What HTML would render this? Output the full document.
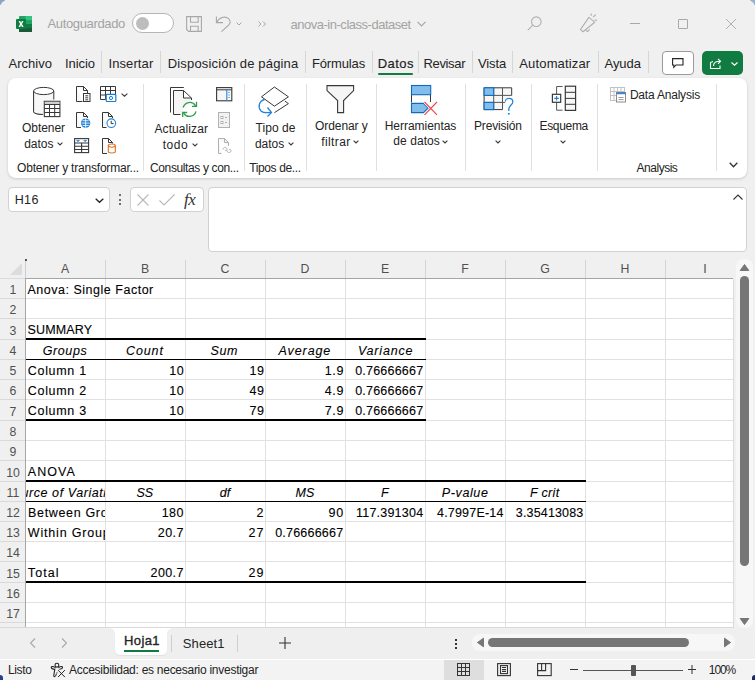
<!DOCTYPE html>
<html><head><meta charset="utf-8">
<style>
*{box-sizing:border-box;margin:0;padding:0}
html,body{width:755px;height:680px;overflow:hidden;background:#f0f0f0;font-family:"Liberation Sans",sans-serif;color:#242424}
.a{position:absolute}
.t{position:absolute;white-space:pre}
svg{position:absolute;overflow:visible}
</style></head><body>
<!-- window corners -->
<div class="a" style="left:0;top:0;width:5px;height:5px;background:#8aa5c4"></div>
<div class="a" style="left:0;top:0;width:10px;height:10px;background:#f0f0f0;border-top-left-radius:8px"></div>
<div class="a" style="left:750px;top:0;width:5px;height:5px;background:#8fb4d6"></div>
<div class="a" style="left:745px;top:0;width:10px;height:10px;background:#f0f0f0;border-top-right-radius:8px"></div>

<!-- excel logo -->
<svg style="left:16px;top:16px" width="16" height="16" viewBox="0 0 16 16">
 <rect x="3" y="0" width="13" height="16" rx="1" fill="#21a366"/>
 <rect x="9.5" y="0" width="6.5" height="4" fill="#33c481"/>
 <rect x="9.5" y="8" width="6.5" height="4" fill="#107c41"/>
 <rect x="3" y="12" width="13" height="4" fill="#185c37"/>
 <rect x="3" y="4" width="6.5" height="4" fill="#107c41"/>
 <rect x="0" y="3" width="10" height="10" rx="1" fill="#107c41"/>
 <path d="M2.6 5 L4.3 5 L5.1 6.9 L5.9 5 L7.5 5 L6 8 L7.6 11 L5.9 11 L5.05 9.1 L4.2 11 L2.5 11 L4.1 8 Z" fill="#fff"/>
</svg>

<!-- toggle -->
<div class="a" style="left:132px;top:13px;width:42px;height:20px;border:1px solid #b5b5b5;border-radius:10px;background:#fff"></div>
<div class="a" style="left:135.5px;top:16.5px;width:13px;height:13px;border-radius:50%;background:#bdbdbd"></div>
<!-- save icon -->
<svg style="left:186px;top:16px" width="16" height="16" viewBox="0 0 16 16" fill="none" stroke="#a8a8a8" stroke-width="1.1">
 <path d="M0.6 0.6 H15.4 V15.4 H2.6 L0.6 13.4 Z"/><path d="M4.5 0.6 V6.2 H12.2 V0.6"/><path d="M4.5 15.4 V10.2 H12.2 V15.4"/>
</svg>
<!-- undo -->
<svg style="left:214px;top:15px" width="18" height="18" viewBox="0 0 18 18" fill="none" stroke="#a8a8a8" stroke-width="1.1">
 <path d="M2.4 1.6 V7.6 H9"/><path d="M2.7 7.3 C5 2.3 11 0.6 14.6 3.6 C17 6 16.2 8.6 14.6 10.2 L7.5 16.6"/>
</svg>
<svg style="left:236px;top:22px" width="6" height="4" viewBox="0 0 6 4" fill="none" stroke="#a8a8a8" stroke-width="1"><path d="M0.5 0.5 L3 3 L5.5 0.5"/></svg>
<svg style="left:258px;top:21px" width="9" height="6" viewBox="0 0 9 6" fill="none" stroke="#a8a8a8" stroke-width="1"><path d="M0.5 0.5 L3 3 L0.5 5.5 M5 0.5 L7.5 3 L5 5.5"/></svg>
<svg style="left:417px;top:21px" width="9" height="6" viewBox="0 0 9 6" fill="none" stroke="#a8a8a8" stroke-width="1.2"><path d="M0.5 0.8 L4.5 4.8 L8.5 0.8"/></svg>
<!-- search -->
<svg style="left:527px;top:16px" width="15" height="15" viewBox="0 0 15 15" fill="none" stroke="#b0b0b0" stroke-width="1.1">
 <circle cx="9.3" cy="5.7" r="4.8"/><path d="M5.8 9.2 L0.8 14.2"/>
</svg>
<!-- megaphone -->
<svg style="left:578px;top:12px" width="20" height="22" viewBox="0 0 20 22" fill="none" stroke="#b0b0b0" stroke-width="1.1" stroke-linejoin="round">
 <path d="M2.4 17.6 L5 19.7 L16.7 10.2 L10.9 5.4 Z"/><path d="M8 17.8 C8.2 20 11.3 20 11.3 17"/><path d="M12.8 3.8 L13.6 1.6 M15.2 5 L17.6 2.6 M16.6 8 L19 8.4"/>
</svg>
<!-- window controls -->
<div class="a" style="left:630px;top:23px;width:10px;height:1px;background:#a8a8a8"></div>
<div class="a" style="left:678px;top:19px;width:10px;height:10px;border:1px solid #a8a8a8;border-radius:1px"></div>
<svg style="left:726px;top:19px" width="10" height="10" viewBox="0 0 10 10" stroke="#b0b0b0" stroke-width="1"><path d="M0 0 L10 10 M10 0 L0 10"/></svg>

<!-- menu separators -->
<div class="a" style="left:101px;top:51px;width:1px;height:22px;background:#d6d6d6"></div>
<div class="a" style="left:160px;top:51px;width:1px;height:22px;background:#d6d6d6"></div>
<div class="a" style="left:305px;top:51px;width:1px;height:22px;background:#d6d6d6"></div>
<div class="a" style="left:372px;top:51px;width:1px;height:22px;background:#d6d6d6"></div>
<div class="a" style="left:418px;top:51px;width:1px;height:22px;background:#d6d6d6"></div>
<div class="a" style="left:472px;top:51px;width:1px;height:22px;background:#d6d6d6"></div>
<div class="a" style="left:512px;top:51px;width:1px;height:22px;background:#d6d6d6"></div>
<div class="a" style="left:598px;top:51px;width:1px;height:22px;background:#d6d6d6"></div>
<div class="a" style="left:648px;top:51px;width:1px;height:22px;background:#d6d6d6"></div>
<div class="a" style="left:378px;top:73px;width:35px;height:2px;background:#107c41;border-radius:1px"></div>
<!-- comment btn -->
<div class="a" style="left:662px;top:51px;width:32px;height:24px;border:1px solid #9a9a9a;border-radius:4px;background:#fff"></div>
<svg style="left:672px;top:58px" width="12" height="11" viewBox="0 0 12 11" fill="none" stroke="#242424" stroke-width="1.1"><path d="M0.6 0.6 H11 V7 H4 L1.8 9.4 V7 H0.6 Z"/></svg>
<!-- share btn -->
<div class="a" style="left:702px;top:51px;width:41px;height:24px;border-radius:5px;background:#107c41"></div>
<svg style="left:709px;top:57px" width="14" height="13" viewBox="0 0 14 13" fill="none" stroke="#fff" stroke-width="1.1"><path d="M4 4.5 L1.5 5.5 V11.5 H11 V8.5"/><path d="M4.5 9 C4.5 5.5 7.5 4.3 11 4.3 M9 1.8 L11.5 4.3 L9 6.8"/></svg>
<svg style="left:731px;top:62px" width="7" height="4" viewBox="0 0 7 4" fill="none" stroke="#fff" stroke-width="1.2"><path d="M0.5 0.5 L3.5 3.3 L6.5 0.5"/></svg>

<!-- ribbon -->
<div class="a" style="left:8px;top:78px;width:739px;height:100px;background:#fff;border-radius:8px;box-shadow:0 1px 3px rgba(0,0,0,.16)"></div>
<div class="a" style="left:143px;top:84px;width:1px;height:87px;background:#e0e0e0"></div>
<div class="a" style="left:244px;top:84px;width:1px;height:87px;background:#e0e0e0"></div>
<div class="a" style="left:306px;top:84px;width:1px;height:87px;background:#e0e0e0"></div>
<div class="a" style="left:376px;top:84px;width:1px;height:87px;background:#e0e0e0"></div>
<div class="a" style="left:465px;top:84px;width:1px;height:87px;background:#e0e0e0"></div>
<div class="a" style="left:531px;top:84px;width:1px;height:87px;background:#e0e0e0"></div>
<div class="a" style="left:597px;top:84px;width:1px;height:87px;background:#e0e0e0"></div>
<div class="a" style="left:716px;top:84px;width:1px;height:87px;background:#e0e0e0"></div>

<!-- ribbon icons -->
<!-- database -->
<svg style="left:33px;top:86px" width="28" height="32" viewBox="0 0 28 32" fill="none" stroke="#383838" stroke-width="1">
 <path d="M0.6 5 V25.6 C0.6 27.2 4.5 28.4 9.9 28.4" fill="#f7f7f7"/>
 <path d="M0.6 5 V25.6 C0.6 27 4 28.2 9.9 28.4 H11.3 V15.3 H20.8 V5 Z" fill="#f7f7f7" stroke="none"/>
 <path d="M0.6 5 V25.6 C0.6 27.2 4.5 28.4 9.9 28.4"/>
 <ellipse cx="10.7" cy="5" rx="10.1" ry="3.6" fill="#fff"/>
 <path d="M20.8 5 V13.6"/>
 <rect x="11.3" y="15.3" width="15.6" height="15.3" fill="#fff" stroke-width="1.1"/>
 <rect x="11.8" y="15.8" width="14.6" height="2.5" fill="#d0d0d0" stroke="none"/>
 <path d="M11.3 18.5 H26.9 M11.3 22.5 H26.9 M11.3 26.5 H26.9 M16.5 18.5 V30.6 M21.7 18.5 V30.6"/>
</svg>
<!-- small icons group 1 -->
<svg style="left:76px;top:86px" width="15" height="16" viewBox="0 0 15 16" fill="none" stroke="#383838" stroke-width="1">
 <path d="M0.5 0.5 H7.5 L11.5 4.5 V7 M0.5 0.5 V15.5 H6.5" fill="#f7f7f7"/><path d="M7.5 0.5 V4.5 H11.5"/><rect x="7.5" y="7.5" width="6.5" height="8" fill="#fff"/><path d="M9.3 9.8 H12.2 M9.3 11.8 H12.2 M9.3 13.8 H12.2"/>
</svg>
<svg style="left:100px;top:86px" width="17" height="16" viewBox="0 0 17 16" fill="none" stroke="#383838" stroke-width="1">
 <path d="M0.5 0.5 H15.5 V8 M0.5 0.5 V13.5 H5.5 M0.5 4.5 H15.5 M0.5 9 H5.5 M5.5 0.5 V13.5 M10.5 0.5 V8"/>
 <rect x="6.2" y="8.4" width="9.6" height="7.1" rx="0.8" fill="#fff" stroke="#1a7bd0" stroke-width="1.2"/><circle cx="11" cy="12" r="1.6" stroke="#1a7bd0"/>
</svg>
<svg style="left:121px;top:93px" width="7" height="4" viewBox="0 0 7 4" fill="none" stroke="#383838" stroke-width="1.1"><path d="M0.6 0.6 L3.5 3.2 L6.4 0.6"/></svg>
<svg style="left:76px;top:112px" width="15" height="16" viewBox="0 0 15 16" fill="none" stroke="#383838" stroke-width="1">
 <path d="M0.5 0.5 H7.5 L11.5 4.5 V6 M0.5 0.5 V15.5 H5" fill="#f7f7f7"/><path d="M7.5 0.5 V4.5 H11.5"/>
 <circle cx="9.6" cy="11.1" r="4.7" fill="#2383d9" stroke="none"/><path d="M5.5 11.1 H13.7 M6.5 8.7 H12.7 M6.5 13.5 H12.7" stroke="#fff" stroke-width="0.8"/><path d="M9.6 6.5 V15.7" stroke="#fff" stroke-width="0.8"/>
</svg>
<svg style="left:102px;top:112px" width="15" height="16" viewBox="0 0 15 16" fill="none" stroke="#383838" stroke-width="1">
 <path d="M0.5 0.5 H6.5 L10.5 4.5 V6 M0.5 0.5 V15.5 H4.5" fill="#f7f7f7"/><path d="M6.5 0.5 V4.5 H10.5"/>
 <circle cx="9.3" cy="11.2" r="4.3" fill="#fff" stroke="#2383d9" stroke-width="1.1"/><path d="M9.2 8.8 V11.6 H11.6" stroke="#383838"/>
</svg>
<svg style="left:74px;top:138px" width="15" height="16" viewBox="0 0 15 16" fill="none" stroke="#383838" stroke-width="1.1">
 <rect x="0.6" y="0.6" width="14" height="14"/><path d="M0.6 5 H14.6 M0.6 8.3 H14.6 M0.6 11.5 H14.6 M7.6 5 V14.6"/>
 <path d="M2.5 2.3 H5.5 L4 3.8 Z M9.7 2.3 H12.7 L11.2 3.8 Z" fill="#2383d9" stroke="#2383d9" stroke-width="0.6"/>
</svg>
<svg style="left:102px;top:138px" width="15" height="16" viewBox="0 0 15 16" fill="none" stroke="#383838" stroke-width="1">
 <path d="M0.5 0.5 H6.5 L10.5 4.5 V5.5 M0.5 0.5 V15.5 H5" fill="#f7f7f7"/><path d="M6.5 0.5 V4.5 H10.5"/>
 <path d="M6.3 7.5 V13.8 C6.3 15.3 13.3 15.3 13.3 13.8 V7.5" stroke="#e0701c" stroke-width="1.1" fill="#fff"/><ellipse cx="9.8" cy="7.6" rx="3.5" ry="1.6" stroke="#e0701c" stroke-width="1.1" fill="#fff"/>
</svg>
<svg style="left:57px;top:142px" width="6" height="4" viewBox="0 0 6 4" fill="none" stroke="#383838" stroke-width="1.1"><path d="M0.6 0.6 L3 3 L5.4 0.6"/></svg>

<!-- actualizar -->
<svg style="left:169px;top:86px" width="29" height="31" viewBox="0 0 29 31" fill="none" stroke="#383838" stroke-width="1">
 <path d="M1.5 26.5 V1.5 H14.8"/>
 <path d="M4.5 4.5 H14.5 V12 H22.5 V28.5 H4.5 Z" fill="#f5f5f5" stroke="none"/>
 <path d="M4.5 4.5 H14.5 L22.5 12 V14 M4.5 4.5 V28.5 H11.5"/>
 <path d="M14.5 4.5 V12 H22.5" fill="none"/>
 <circle cx="20.6" cy="23.4" r="7" fill="#fff" stroke="none"/>
 <path d="M14.2 21.5 A6.8 6.8 0 0 1 26.6 19.8" stroke="#2e9e4e" stroke-width="1.3"/>
 <path d="M27.5 15.8 V20.4 H23" stroke="#2e9e4e" stroke-width="1.3"/>
 <path d="M27 25.4 A6.8 6.8 0 0 1 14.6 27.1" stroke="#2e9e4e" stroke-width="1.3"/>
 <path d="M13.7 31 V26.5 H18.2" stroke="#2e9e4e" stroke-width="1.3"/>
</svg>
<svg style="left:216px;top:87px" width="17" height="15" viewBox="0 0 17 15" fill="none" stroke="#383838" stroke-width="1.1">
 <rect x="0.6" y="0.6" width="15.2" height="13.2" fill="#f7f7f7"/><path d="M0.6 2.8 H15.8" stroke-width="1"/><path d="M10.8 2.8 V13.8" stroke="#2383d9" stroke-width="1.1"/><path d="M13 4.9 V6 M13 7.4 V8.5 M13 9.9 V11" stroke="#2383d9" stroke-width="1.1"/>
</svg>
<svg style="left:218px;top:112px" width="12" height="16" viewBox="0 0 12 16" fill="none" stroke="#b0b0b0" stroke-width="1">
 <rect x="0.5" y="0.5" width="11" height="15" fill="#f2f2f2"/><rect x="3" y="4.5" width="2" height="2"/><rect x="3" y="9.5" width="2" height="2"/><path d="M7 5.5 H9 M7 10.5 H9"/>
</svg>
<svg style="left:218px;top:138px" width="15" height="16" viewBox="0 0 15 16" fill="none" stroke="#b0b0b0" stroke-width="1">
 <path d="M0.5 0.5 H6.5 L10.5 4.5 V8 M0.5 0.5 V15.5 H3.5" fill="#f7f7f7"/><path d="M6.5 0.5 V4.5 H10.5"/><path d="M5 11.5 C5 8.8 9 8.8 9 11.5 C9 13 7 13 7 11.8 M9 12.5 C9 15.2 13 15.2 13 12.5 C13 11 11 11 11 12.2"/>
</svg>
<svg style="left:192px;top:143px" width="6" height="4" viewBox="0 0 6 4" fill="none" stroke="#383838" stroke-width="1.1"><path d="M0.6 0.6 L3 3 L5.4 0.6"/></svg>

<!-- tipos de datos -->
<svg style="left:258px;top:86px" width="32" height="32" viewBox="0 0 32 32" fill="none" stroke="#383838" stroke-width="1">
 <path d="M3.5 10.8 L16.4 1 L30.4 10.8 L16.4 20.2 Z" fill="#fff"/>
 <path d="M26.8 15 L30.4 17.6 L16.4 26.7"/>
 <path d="M6.5 13.5 C1 15 -0.5 21 3 25 C5 27 8 27 13 26.5" stroke="#2383d9" stroke-width="1.3"/>
 <path d="M9.5 21.5 L13.5 26.5 L9.5 30.5" stroke="#2383d9" stroke-width="1.3"/>
</svg>
<svg style="left:288px;top:142px" width="6" height="4" viewBox="0 0 6 4" fill="none" stroke="#383838" stroke-width="1.1"><path d="M0.6 0.6 L3 3 L5.4 0.6"/></svg>

<!-- filter -->
<svg style="left:326px;top:85px" width="29" height="29" viewBox="0 0 29 29" fill="none" stroke="#383838" stroke-width="1.1">
 <path d="M1 0.6 H27.6 V5.6 L17.6 15.6 V27.6 H11.6 V15.6 L1 5.6 Z" fill="#f5f5f5"/>
</svg>
<svg style="left:353px;top:140px" width="6" height="4" viewBox="0 0 6 4" fill="none" stroke="#383838" stroke-width="1.1"><path d="M0.6 0.6 L3 3 L5.4 0.6"/></svg>

<!-- herramientas -->
<svg style="left:410px;top:84px" width="30" height="32" viewBox="0 0 30 32" fill="none" stroke="#383838" stroke-width="1">
 <path d="M1.5 10.7 V18.5 M20.5 10.7 V18" stroke="#383838"/>
 <rect x="1.5" y="1.5" width="19.2" height="9.2" fill="#83bdeb" stroke="#0f6cbd" stroke-width="1.1"/>
 <path d="M1.5 19.4 H13.5 L18.3 24 L13.5 28.6 H1.5 Z" fill="#83bdeb" stroke="#0f6cbd" stroke-width="1.1"/>
 <path d="M14.5 18 L27 30.8 M27 18 L14.5 30.8" stroke="#fff" stroke-width="2.6"/>
 <path d="M14.5 18 L27 30.8 M27 18 L14.5 30.8" stroke="#ec4b52" stroke-width="1.2"/>
</svg>
<svg style="left:442px;top:140px" width="6" height="4" viewBox="0 0 6 4" fill="none" stroke="#383838" stroke-width="1.1"><path d="M0.6 0.6 L3 3 L5.4 0.6"/></svg>

<!-- prevision -->
<svg style="left:483px;top:86px" width="32" height="30" viewBox="0 0 32 30" fill="none" stroke="#383838" stroke-width="1">
 <path d="M19.5 23.6 H1.1 V1.8 H28.7 V9.5" fill="#f7f7f7"/>
 <path d="M1.1 9.4 H28.7 M1.1 16.4 H22 M10.7 1.8 V23.6 M19.5 1.8 V23.6" stroke="#555"/>
 <rect x="1.1" y="1.8" width="9.6" height="7.6" fill="#83bdeb" stroke="#0f6cbd" stroke-width="1.1"/>
 <rect x="1.1" y="16.4" width="9.6" height="7.2" fill="#83bdeb" stroke="#0f6cbd" stroke-width="1.1"/>
 <path d="M22.3 15.5 C22.3 11.5 29.8 11.2 29.8 15.8 C29.8 19.2 25.8 19.5 25.8 23 V25" stroke="#fff" stroke-width="3"/>
 <path d="M22.3 15.5 C22.3 11.5 29.8 11.2 29.8 15.8 C29.8 19.2 25.8 19.5 25.8 23 V25" stroke="#2383d9" stroke-width="1.3"/>
 <rect x="24.9" y="27" width="1.8" height="1.6" fill="#2383d9" stroke="none"/>
</svg>
<svg style="left:495px;top:140px" width="6" height="4" viewBox="0 0 6 4" fill="none" stroke="#383838" stroke-width="1.1"><path d="M0.6 0.6 L3 3 L5.4 0.6"/></svg>

<!-- esquema -->
<svg style="left:551px;top:85px" width="26" height="27" viewBox="0 0 26 27" fill="none" stroke="#383838" stroke-width="1">
 <rect x="14.3" y="1.2" width="10.3" height="24.2" stroke-width="1.2" fill="#f7f7f7"/><path d="M14.3 7.3 H24.6 M14.3 13.4 H24.6 M14.3 19.3 H24.6"/>
 <path d="M11.6 1.5 H5.6 V10 M5.6 17 V25.2 H11.6" stroke="#555"/>
 <rect x="1.4" y="9.3" width="8.3" height="8" fill="#fff" stroke-width="1.2"/><path d="M3.3 13.3 H7.8 M5.55 11 V15.6" stroke="#2383d9" stroke-width="1.2"/>
</svg>
<svg style="left:560px;top:140px" width="6" height="4" viewBox="0 0 6 4" fill="none" stroke="#383838" stroke-width="1.1"><path d="M0.6 0.6 L3 3 L5.4 0.6"/></svg>

<!-- data analysis icon -->
<svg style="left:610px;top:87px" width="17" height="16" viewBox="0 0 17 16" fill="none" stroke="#c2c2c2" stroke-width="1">
 <rect x="0.5" y="0.5" width="14" height="13"/><path d="M0.5 4.5 H14.5 M0.5 8.5 H14.5 M4 0.5 V13.5 M7.5 0.5 V13.5 M11 0.5 V13.5"/>
 <rect x="6.5" y="5.5" width="9" height="9.5" fill="#fff" stroke="#8c8c8c"/><path d="M6.5 6.3 H15.5" stroke="#3f7fd0" stroke-width="1.8"/><path d="M8.5 10.5 H13.5 M8.5 12.6 H13.5" stroke="#9a9a9a"/>
</svg>
<svg style="left:729px;top:162px" width="9" height="6" viewBox="0 0 9 6" fill="none" stroke="#333" stroke-width="1.3"><path d="M0.7 0.7 L4.5 4.7 L8.3 0.7"/></svg>

<!-- formula bar -->
<div class="a" style="left:8px;top:187px;width:102px;height:25px;background:#fff;border:1px solid #d1d1d1;border-radius:4px"></div>
<svg style="left:95px;top:198px" width="9" height="5" viewBox="0 0 9 5" fill="none" stroke="#242424" stroke-width="1.3"><path d="M0.7 0.7 L4.5 4.3 L8.3 0.7"/></svg>
<div class="a" style="left:118.5px;top:194px;width:2px;height:2px;background:#444;border-radius:1px"></div>
<div class="a" style="left:118.5px;top:198.5px;width:2px;height:2px;background:#444;border-radius:1px"></div>
<div class="a" style="left:118.5px;top:203px;width:2px;height:2px;background:#444;border-radius:1px"></div>
<div class="a" style="left:130px;top:187px;width:74px;height:25px;background:#fff;border:1px solid #d1d1d1;border-radius:4px"></div>
<svg style="left:137px;top:194px" width="12" height="12" viewBox="0 0 12 12" stroke="#b8b8b8" stroke-width="1.1"><path d="M0.5 0.5 L11.5 11.5 M11.5 0.5 L0.5 11.5"/></svg>
<svg style="left:159px;top:194px" width="16" height="12" viewBox="0 0 16 12" fill="none" stroke="#b8b8b8" stroke-width="1.1"><path d="M0.5 6.5 L5 11 L15.5 0.5"/></svg>
<div class="t" style="left:184px;top:191px;font-family:'Liberation Serif',serif;font-style:italic;font-size:17px;line-height:17px;color:#333;letter-spacing:-0.5px">fx</div>
<div class="a" style="left:208px;top:187px;width:539px;height:65px;background:#fff;border:1px solid #d1d1d1;border-radius:4px"></div>
<svg style="left:733px;top:194px" width="10" height="6" viewBox="0 0 10 6" fill="none" stroke="#333" stroke-width="1.1"><path d="M0.5 5.5 L5 1 L9.5 5.5"/></svg>

<!-- sheet area -->
<div class="a" style="left:26px;top:279px;width:707px;height:348px;background:#fff"></div>
<div class="a" style="left:25px;top:260px;width:1px;height:18px;background:#cdcdcd"></div>
<div class="a" style="left:25px;top:278px;width:1px;height:349px;background:#a6a6a6"></div>
<div class="a" style="left:0px;top:278px;width:25px;height:1px;background:#dadada"></div>
<div class="a" style="left:25px;top:278px;width:708px;height:1px;background:#a6a6a6"></div>
<div class="a" style="left:24.5px;top:258.5px;width:2px;height:2px;background:#222;border-radius:1px"></div>
<svg style="left:10px;top:263px" width="12" height="12" viewBox="0 0 12 12"><path d="M12 0 V12 H0 Z" fill="#dcdcdc"/></svg>
<div class="a" style="left:26px;top:298px;width:707px;height:1px;background:#e1e1e1"></div>
<div class="a" style="left:0px;top:298px;width:25px;height:1px;background:#d9d9d9"></div>
<div class="a" style="left:26px;top:318px;width:707px;height:1px;background:#e1e1e1"></div>
<div class="a" style="left:0px;top:318px;width:25px;height:1px;background:#d9d9d9"></div>
<div class="a" style="left:26px;top:339px;width:707px;height:1px;background:#e1e1e1"></div>
<div class="a" style="left:0px;top:339px;width:25px;height:1px;background:#d9d9d9"></div>
<div class="a" style="left:26px;top:359px;width:707px;height:1px;background:#e1e1e1"></div>
<div class="a" style="left:0px;top:359px;width:25px;height:1px;background:#d9d9d9"></div>
<div class="a" style="left:26px;top:379px;width:707px;height:1px;background:#e1e1e1"></div>
<div class="a" style="left:0px;top:379px;width:25px;height:1px;background:#d9d9d9"></div>
<div class="a" style="left:26px;top:399px;width:707px;height:1px;background:#e1e1e1"></div>
<div class="a" style="left:0px;top:399px;width:25px;height:1px;background:#d9d9d9"></div>
<div class="a" style="left:26px;top:420px;width:707px;height:1px;background:#e1e1e1"></div>
<div class="a" style="left:0px;top:420px;width:25px;height:1px;background:#d9d9d9"></div>
<div class="a" style="left:26px;top:440px;width:707px;height:1px;background:#e1e1e1"></div>
<div class="a" style="left:0px;top:440px;width:25px;height:1px;background:#d9d9d9"></div>
<div class="a" style="left:26px;top:460px;width:707px;height:1px;background:#e1e1e1"></div>
<div class="a" style="left:0px;top:460px;width:25px;height:1px;background:#d9d9d9"></div>
<div class="a" style="left:26px;top:481px;width:707px;height:1px;background:#e1e1e1"></div>
<div class="a" style="left:0px;top:481px;width:25px;height:1px;background:#d9d9d9"></div>
<div class="a" style="left:26px;top:501px;width:707px;height:1px;background:#e1e1e1"></div>
<div class="a" style="left:0px;top:501px;width:25px;height:1px;background:#d9d9d9"></div>
<div class="a" style="left:26px;top:521px;width:707px;height:1px;background:#e1e1e1"></div>
<div class="a" style="left:0px;top:521px;width:25px;height:1px;background:#d9d9d9"></div>
<div class="a" style="left:26px;top:541px;width:707px;height:1px;background:#e1e1e1"></div>
<div class="a" style="left:0px;top:541px;width:25px;height:1px;background:#d9d9d9"></div>
<div class="a" style="left:26px;top:561px;width:707px;height:1px;background:#e1e1e1"></div>
<div class="a" style="left:0px;top:561px;width:25px;height:1px;background:#d9d9d9"></div>
<div class="a" style="left:26px;top:582px;width:707px;height:1px;background:#e1e1e1"></div>
<div class="a" style="left:0px;top:582px;width:25px;height:1px;background:#d9d9d9"></div>
<div class="a" style="left:26px;top:602px;width:707px;height:1px;background:#e1e1e1"></div>
<div class="a" style="left:0px;top:602px;width:25px;height:1px;background:#d9d9d9"></div>
<div class="a" style="left:26px;top:622px;width:707px;height:1px;background:#e1e1e1"></div>
<div class="a" style="left:0px;top:622px;width:25px;height:1px;background:#d9d9d9"></div>
<div class="a" style="left:105px;top:279px;width:1px;height:348px;background:#e1e1e1"></div>
<div class="a" style="left:105px;top:260px;width:1px;height:18px;background:#d4d4d4"></div>
<div class="a" style="left:185px;top:279px;width:1px;height:348px;background:#e1e1e1"></div>
<div class="a" style="left:185px;top:260px;width:1px;height:18px;background:#d4d4d4"></div>
<div class="a" style="left:265px;top:279px;width:1px;height:348px;background:#e1e1e1"></div>
<div class="a" style="left:265px;top:260px;width:1px;height:18px;background:#d4d4d4"></div>
<div class="a" style="left:345px;top:279px;width:1px;height:348px;background:#e1e1e1"></div>
<div class="a" style="left:345px;top:260px;width:1px;height:18px;background:#d4d4d4"></div>
<div class="a" style="left:425px;top:279px;width:1px;height:348px;background:#e1e1e1"></div>
<div class="a" style="left:425px;top:260px;width:1px;height:18px;background:#d4d4d4"></div>
<div class="a" style="left:505px;top:279px;width:1px;height:348px;background:#e1e1e1"></div>
<div class="a" style="left:505px;top:260px;width:1px;height:18px;background:#d4d4d4"></div>
<div class="a" style="left:585px;top:279px;width:1px;height:348px;background:#e1e1e1"></div>
<div class="a" style="left:585px;top:260px;width:1px;height:18px;background:#d4d4d4"></div>
<div class="a" style="left:665px;top:279px;width:1px;height:348px;background:#e1e1e1"></div>
<div class="a" style="left:665px;top:260px;width:1px;height:18px;background:#d4d4d4"></div>
<div class="a" style="left:26px;top:338px;width:400px;height:2px;background:#000"></div>
<div class="a" style="left:26px;top:359px;width:400px;height:1px;background:#000"></div>
<div class="a" style="left:26px;top:419px;width:400px;height:2px;background:#000"></div>
<div class="a" style="left:26px;top:480px;width:560px;height:2px;background:#000"></div>
<div class="a" style="left:26px;top:501px;width:560px;height:1px;background:#000"></div>
<div class="a" style="left:26px;top:581px;width:560px;height:2px;background:#000"></div>
<div class="a" style="left:0;top:627px;width:734px;height:1px;background:#d9d9d9"></div>
<div class="a" style="left:733px;top:279px;width:1px;height:349px;background:#dcdcdc"></div>

<!-- vertical scrollbar -->
<div class="a" style="left:736px;top:259px;width:17px;height:369px;background:#f7f7f7;border-radius:8px"></div>
<svg style="left:740px;top:264px" width="9" height="7" viewBox="0 0 9 7"><path d="M4.5 0.5 L8.8 6.5 H0.2 Z" fill="#767676" stroke="#767676" stroke-linejoin="round"/></svg>
<div class="a" style="left:740px;top:276px;width:9px;height:290px;background:#767676;border-radius:4.5px"></div>
<svg style="left:740px;top:618px" width="9" height="7" viewBox="0 0 9 7"><path d="M0.2 0.5 H8.8 L4.5 6.5 Z" fill="#767676" stroke="#767676" stroke-linejoin="round"/></svg>

<!-- tab bar -->
<div class="a" style="left:0;top:628px;width:755px;height:31px;background:#efefef"></div>
<div class="a" style="left:100px;top:628px;width:80px;height:8px;background:#fff"></div>
<div class="a" style="left:0px;top:628px;width:115px;height:31px;background:#efefef;border-radius:0 6px 0 0"></div>
<div class="a" style="left:167px;top:628px;width:588px;height:31px;background:#efefef;border-radius:6px 0 0 0"></div>
<div class="a" style="left:115px;top:628px;width:52px;height:27px;background:#fff;border-radius:0 0 5px 5px;box-shadow:0 1px 1px rgba(0,0,0,.06)"></div>
<div class="a" style="left:124px;top:650px;width:35px;height:2px;background:#107c41"></div>
<svg style="left:29px;top:638px" width="7" height="10" viewBox="0 0 7 10" fill="none" stroke="#a8a8a8" stroke-width="1.1"><path d="M6 0.5 L1.5 5 L6 9.5"/></svg>
<svg style="left:61px;top:638px" width="7" height="10" viewBox="0 0 7 10" fill="none" stroke="#a8a8a8" stroke-width="1.1"><path d="M1 0.5 L5.5 5 L1 9.5"/></svg>
<div class="a" style="left:171px;top:635px;width:1px;height:17px;background:#cfcfcf"></div>
<div class="a" style="left:237px;top:635px;width:1px;height:17px;background:#cfcfcf"></div>
<svg style="left:279px;top:637px" width="12" height="12" viewBox="0 0 12 12" stroke="#333" stroke-width="1.1"><path d="M6 0 V12 M0 6 H12"/></svg>
<div class="a" style="left:455px;top:639px;width:2px;height:2px;background:#333"></div>
<div class="a" style="left:455px;top:643px;width:2px;height:2px;background:#333"></div>
<div class="a" style="left:455px;top:647px;width:2px;height:2px;background:#333"></div>
<!-- h scrollbar -->
<div class="a" style="left:472px;top:634px;width:263px;height:17px;background:#f7f7f7;border-radius:8px"></div>
<svg style="left:477px;top:638px" width="7" height="9" viewBox="0 0 7 9"><path d="M6.5 0.2 V8.8 L0.5 4.5 Z" fill="#767676" stroke="#767676" stroke-linejoin="round"/></svg>
<div class="a" style="left:488px;top:638px;width:201px;height:9px;background:#767676;border-radius:4.5px"></div>
<svg style="left:724px;top:638px" width="7" height="9" viewBox="0 0 7 9"><path d="M0.5 0.2 V8.8 L6.5 4.5 Z" fill="#767676" stroke="#767676" stroke-linejoin="round"/></svg>

<!-- status bar -->
<div class="a" style="left:0;top:659px;width:755px;height:1px;background:#fff"></div>
<div class="a" style="left:0;top:660px;width:755px;height:20px;background:#f3f3f3"></div>
<svg style="left:50px;top:662px" width="16" height="16" viewBox="0 0 16 16" fill="none" stroke="#242424" stroke-width="1.1" stroke-linecap="round">
 <circle cx="6.9" cy="3.2" r="1.9"/>
 <path d="M5.2 5.6 C3.5 4.2 1.2 4 1.3 5.6 C1.4 6.8 3.5 7.2 4.8 7.3 L4 12 C3.6 14 3.8 14.7 4.6 14.7 C5.4 14.7 6 13.5 6.3 12"/>
 <path d="M8.6 5.6 C10.3 4.2 12.6 4 12.5 5.6 C12.4 6.5 11 7 9.8 7.3"/>
 <circle cx="6.9" cy="10.8" r="0.6" fill="#242424" stroke="none"/>
 <path d="M8.3 8.4 L14.6 14.8 M14.6 8.4 L8.3 14.8" stroke-width="1"/>
</svg>
<div class="a" style="left:444px;top:660px;width:40px;height:20px;background:#dedede"></div>
<svg style="left:457px;top:663px" width="13" height="13" viewBox="0 0 13 13" fill="none" stroke="#333" stroke-width="1"><rect x="0.5" y="0.5" width="12" height="12"/><path d="M4.5 0.5 V12.5 M8.5 0.5 V12.5 M0.5 4.5 H12.5 M0.5 8.5 H12.5"/></svg>
<svg style="left:497px;top:663px" width="14" height="13" viewBox="0 0 14 13" fill="none" stroke="#333" stroke-width="1.1"><rect x="0.6" y="0.6" width="12.8" height="12"/><rect x="3.5" y="2.6" width="7" height="8"/><path d="M5 4.5 H9 M5 6.5 H9 M5 8.4 H9"/></svg>
<svg style="left:537px;top:663px" width="15" height="13" viewBox="0 0 15 13" fill="none" stroke="#333" stroke-width="1.1"><rect x="0.6" y="0.6" width="13.6" height="12"/><path d="M8.6 0.6 V7.6 H0.6 M4.6 0.6 V7.6"/></svg>
<div class="a" style="left:570px;top:669px;width:8px;height:1px;background:#333"></div>
<div class="a" style="left:583px;top:670px;width:100px;height:1px;background:#555"></div>
<div class="a" style="left:631px;top:665px;width:5px;height:11px;background:#555;border-radius:1px"></div>
<svg style="left:688px;top:665px" width="8" height="9" viewBox="0 0 8 9" stroke="#333" stroke-width="1"><path d="M4 0 V9 M0 4.5 H8"/></svg>
<div class="a" style="left:0;top:675px;width:3px;height:5px;background:#2a3f8a;border-top-right-radius:3px"></div>

<div class="a" style="left:752px;top:675px;width:3px;height:5px;background:#1c2a6a;border-top-left-radius:3px"></div>
<div class="t" style="left:47.48px;top:17.02px;font-size:13px;line-height:13px;color:#a3a3a3;letter-spacing:-0.350px;">Autoguardado</div>
<div class="t" style="left:290.48px;top:18.02px;font-size:13px;line-height:13px;color:#a3a3a3;letter-spacing:-0.479px;">anova-in-class-dataset</div>
<div class="t" style="left:8.48px;top:57.02px;font-size:13px;line-height:13px;color:#242424;letter-spacing:0.030px;">Archivo</div>
<div class="t" style="left:64.88px;top:57.02px;font-size:13px;line-height:13px;color:#242424;letter-spacing:-0.024px;">Inicio</div>
<div class="t" style="left:108.48px;top:57.02px;font-size:13px;line-height:13px;color:#242424;letter-spacing:0.095px;">Insertar</div>
<div class="t" style="left:167.78px;top:57.02px;font-size:13px;line-height:13px;color:#242424;letter-spacing:0.162px;">Disposición de página</div>
<div class="t" style="left:311.98px;top:57.02px;font-size:13px;line-height:13px;color:#242424;letter-spacing:-0.135px;">Fórmulas</div>
<div class="t" style="left:423.48px;top:57.02px;font-size:13px;line-height:13px;color:#242424;letter-spacing:-0.340px;">Revisar</div>
<div class="t" style="left:477.88px;top:57.02px;font-size:13px;line-height:13px;color:#242424;letter-spacing:-0.083px;">Vista</div>
<div class="t" style="left:519.28px;top:57.02px;font-size:13px;line-height:13px;color:#242424;letter-spacing:0.157px;">Automatizar</div>
<div class="t" style="left:604.48px;top:57.02px;font-size:13px;line-height:13px;color:#242424;letter-spacing:-0.025px;">Ayuda</div>
<div class="t" style="left:377.68px;top:57.02px;font-size:13px;line-height:13px;color:#1f1f1f;letter-spacing:0.468px;-webkit-text-stroke:0.2px #1f1f1f;">Datos</div>
<div class="t" style="left:22.02px;top:121.82px;font-size:12px;line-height:12px;color:#242424;letter-spacing:-0.050px;">Obtener</div>
<div class="t" style="left:24.22px;top:137.52px;font-size:12px;line-height:12px;color:#242424;letter-spacing:-0.025px;">datos</div>
<div class="t" style="left:17.12px;top:161.62px;font-size:12px;line-height:12px;color:#242424;letter-spacing:-0.203px;">Obtener y transformar...</div>
<div class="t" style="left:154.52px;top:122.72px;font-size:12px;line-height:12px;color:#242424;letter-spacing:0.075px;">Actualizar</div>
<div class="t" style="left:162.72px;top:138.62px;font-size:12px;line-height:12px;color:#242424;letter-spacing:0.534px;">todo</div>
<div class="t" style="left:150.02px;top:162.02px;font-size:12px;line-height:12px;color:#242424;letter-spacing:-0.378px;">Consultas y con...</div>
<div class="t" style="left:255.52px;top:122.02px;font-size:12px;line-height:12px;color:#242424;letter-spacing:0.061px;">Tipo de</div>
<div class="t" style="left:254.92px;top:138.02px;font-size:12px;line-height:12px;color:#242424;letter-spacing:-0.025px;">datos</div>
<div class="t" style="left:249.22px;top:162.02px;font-size:12px;line-height:12px;color:#242424;letter-spacing:-0.383px;">Tipos de...</div>
<div class="t" style="left:315.02px;top:120.42px;font-size:12px;line-height:12px;color:#242424;letter-spacing:-0.075px;">Ordenar y</div>
<div class="t" style="left:321.32px;top:135.72px;font-size:12px;line-height:12px;color:#242424;letter-spacing:0.381px;">filtrar</div>
<div class="t" style="left:384.72px;top:119.82px;font-size:12px;line-height:12px;color:#242424;letter-spacing:-0.034px;">Herramientas</div>
<div class="t" style="left:393.32px;top:135.02px;font-size:12px;line-height:12px;color:#242424;letter-spacing:0.073px;">de datos</div>
<div class="t" style="left:474.02px;top:119.82px;font-size:12px;line-height:12px;color:#242424;letter-spacing:-0.187px;">Previsión</div>
<div class="t" style="left:539.52px;top:119.82px;font-size:12px;line-height:12px;color:#242424;letter-spacing:-0.324px;">Esquema</div>
<div class="t" style="left:629.92px;top:89.22px;font-size:12px;line-height:12px;color:#242424;letter-spacing:-0.204px;">Data Analysis</div>
<div class="t" style="left:636.52px;top:162.02px;font-size:12px;line-height:12px;color:#242424;letter-spacing:-0.475px;">Analysis</div>
<div class="t" style="left:14.70px;top:193.77px;font-size:12.5px;line-height:12.5px;color:#242424;letter-spacing:0.381px;">H16</div>
<div class="t" style="left:60.90px;top:262.87px;font-size:12.3px;line-height:12.3px;color:#505050;">A</div>
<div class="t" style="left:140.90px;top:262.87px;font-size:12.3px;line-height:12.3px;color:#505050;">B</div>
<div class="t" style="left:220.55px;top:262.87px;font-size:12.3px;line-height:12.3px;color:#505050;">C</div>
<div class="t" style="left:300.55px;top:262.87px;font-size:12.3px;line-height:12.3px;color:#505050;">D</div>
<div class="t" style="left:380.90px;top:262.87px;font-size:12.3px;line-height:12.3px;color:#505050;">E</div>
<div class="t" style="left:461.24px;top:262.87px;font-size:12.3px;line-height:12.3px;color:#505050;">F</div>
<div class="t" style="left:540.21px;top:262.87px;font-size:12.3px;line-height:12.3px;color:#505050;">G</div>
<div class="t" style="left:620.55px;top:262.87px;font-size:12.3px;line-height:12.3px;color:#505050;">H</div>
<div class="t" style="left:703.29px;top:262.87px;font-size:12.3px;line-height:12.3px;color:#505050;">I</div>
<div class="t" style="left:9.58px;top:283.87px;font-size:12.3px;line-height:12.3px;color:#505050;">1</div>
<div class="t" style="left:9.58px;top:303.87px;font-size:12.3px;line-height:12.3px;color:#505050;">2</div>
<div class="t" style="left:9.58px;top:324.87px;font-size:12.3px;line-height:12.3px;color:#505050;">3</div>
<div class="t" style="left:9.58px;top:344.87px;font-size:12.3px;line-height:12.3px;color:#505050;">4</div>
<div class="t" style="left:9.58px;top:364.87px;font-size:12.3px;line-height:12.3px;color:#505050;">5</div>
<div class="t" style="left:9.58px;top:384.87px;font-size:12.3px;line-height:12.3px;color:#505050;">6</div>
<div class="t" style="left:9.58px;top:405.87px;font-size:12.3px;line-height:12.3px;color:#505050;">7</div>
<div class="t" style="left:9.58px;top:425.87px;font-size:12.3px;line-height:12.3px;color:#505050;">8</div>
<div class="t" style="left:9.58px;top:445.87px;font-size:12.3px;line-height:12.3px;color:#505050;">9</div>
<div class="t" style="left:6.16px;top:466.87px;font-size:12.3px;line-height:12.3px;color:#505050;">10</div>
<div class="t" style="left:6.62px;top:486.87px;font-size:12.3px;line-height:12.3px;color:#505050;">11</div>
<div class="t" style="left:6.16px;top:506.87px;font-size:12.3px;line-height:12.3px;color:#505050;">12</div>
<div class="t" style="left:6.16px;top:526.87px;font-size:12.3px;line-height:12.3px;color:#505050;">13</div>
<div class="t" style="left:6.16px;top:546.87px;font-size:12.3px;line-height:12.3px;color:#505050;">14</div>
<div class="t" style="left:6.16px;top:567.87px;font-size:12.3px;line-height:12.3px;color:#505050;">15</div>
<div class="t" style="left:6.16px;top:587.87px;font-size:12.3px;line-height:12.3px;color:#505050;">16</div>
<div class="t" style="left:6.16px;top:607.87px;font-size:12.3px;line-height:12.3px;color:#505050;">17</div>
<div class="t" style="left:27.50px;top:283.77px;font-size:12.5px;line-height:12.5px;color:#000;letter-spacing:0.513px;-webkit-text-stroke:0.1px #000;">Anova: Single Factor</div>
<div class="t" style="left:27.50px;top:323.77px;font-size:12.5px;line-height:12.5px;color:#000;letter-spacing:0.155px;-webkit-text-stroke:0.1px #000;">SUMMARY</div>
<div class="t" style="left:42.70px;top:344.77px;font-size:12.5px;line-height:12.5px;color:#000;letter-spacing:0.600px;font-style:italic;-webkit-text-stroke:0.1px #000;">Groups</div>
<div class="t" style="left:126.10px;top:344.77px;font-size:12.5px;line-height:12.5px;color:#000;letter-spacing:0.860px;font-style:italic;-webkit-text-stroke:0.1px #000;">Count</div>
<div class="t" style="left:210.50px;top:344.77px;font-size:12.5px;line-height:12.5px;color:#000;letter-spacing:0.648px;font-style:italic;-webkit-text-stroke:0.1px #000;">Sum</div>
<div class="t" style="left:278.60px;top:344.77px;font-size:12.5px;line-height:12.5px;color:#000;letter-spacing:0.893px;font-style:italic;-webkit-text-stroke:0.1px #000;">Average</div>
<div class="t" style="left:357.90px;top:344.77px;font-size:12.5px;line-height:12.5px;color:#000;letter-spacing:0.818px;font-style:italic;-webkit-text-stroke:0.1px #000;">Variance</div>
<div class="t" style="left:27.80px;top:364.77px;font-size:12.5px;line-height:12.5px;color:#000;letter-spacing:0.686px;-webkit-text-stroke:0.1px #000;">Column 1</div>
<div class="t" style="left:169.20px;top:364.77px;font-size:12.5px;line-height:12.5px;color:#000;letter-spacing:0.594px;-webkit-text-stroke:0.1px #000;">10</div>
<div class="t" style="left:249.50px;top:364.77px;font-size:12.5px;line-height:12.5px;color:#000;letter-spacing:0.494px;-webkit-text-stroke:0.1px #000;">19</div>
<div class="t" style="left:324.80px;top:364.77px;font-size:12.5px;line-height:12.5px;color:#000;letter-spacing:0.605px;-webkit-text-stroke:0.1px #000;">1.9</div>
<div class="t" style="left:355.20px;top:364.77px;font-size:12.5px;line-height:12.5px;color:#000;letter-spacing:0.206px;-webkit-text-stroke:0.1px #000;">0.76666667</div>
<div class="t" style="left:27.80px;top:384.77px;font-size:12.5px;line-height:12.5px;color:#000;letter-spacing:0.686px;-webkit-text-stroke:0.1px #000;">Column 2</div>
<div class="t" style="left:169.20px;top:384.77px;font-size:12.5px;line-height:12.5px;color:#000;letter-spacing:0.594px;-webkit-text-stroke:0.1px #000;">10</div>
<div class="t" style="left:249.50px;top:384.77px;font-size:12.5px;line-height:12.5px;color:#000;letter-spacing:0.494px;-webkit-text-stroke:0.1px #000;">49</div>
<div class="t" style="left:324.80px;top:384.77px;font-size:12.5px;line-height:12.5px;color:#000;letter-spacing:0.605px;-webkit-text-stroke:0.1px #000;">4.9</div>
<div class="t" style="left:355.20px;top:384.77px;font-size:12.5px;line-height:12.5px;color:#000;letter-spacing:0.206px;-webkit-text-stroke:0.1px #000;">0.76666667</div>
<div class="t" style="left:27.80px;top:404.77px;font-size:12.5px;line-height:12.5px;color:#000;letter-spacing:0.686px;-webkit-text-stroke:0.1px #000;">Column 3</div>
<div class="t" style="left:169.20px;top:404.77px;font-size:12.5px;line-height:12.5px;color:#000;letter-spacing:0.594px;-webkit-text-stroke:0.1px #000;">10</div>
<div class="t" style="left:249.50px;top:404.77px;font-size:12.5px;line-height:12.5px;color:#000;letter-spacing:0.494px;-webkit-text-stroke:0.1px #000;">79</div>
<div class="t" style="left:324.80px;top:404.77px;font-size:12.5px;line-height:12.5px;color:#000;letter-spacing:0.605px;-webkit-text-stroke:0.1px #000;">7.9</div>
<div class="t" style="left:355.20px;top:404.77px;font-size:12.5px;line-height:12.5px;color:#000;letter-spacing:0.206px;-webkit-text-stroke:0.1px #000;">0.76666667</div>
<div class="t" style="left:27.80px;top:465.77px;font-size:12.5px;line-height:12.5px;color:#000;letter-spacing:1.064px;-webkit-text-stroke:0.1px #000;">ANOVA</div>
<div class="a" style="left:26px;top:477px;width:79px;height:24px;overflow:hidden"><div class="t" style="left:-20.95px;top:9.77px;font-size:12.5px;line-height:12.5px;color:#000;letter-spacing:0.568px;font-style:italic;-webkit-text-stroke:0.1px #000;">Source of Variation</div></div>
<div class="t" style="left:136.46px;top:486.77px;font-size:12.5px;line-height:12.5px;color:#000;font-style:italic;-webkit-text-stroke:0.1px #000;">SS</div>
<div class="t" style="left:219.78px;top:486.77px;font-size:12.5px;line-height:12.5px;color:#000;font-style:italic;-webkit-text-stroke:0.1px #000;">df</div>
<div class="t" style="left:295.62px;top:486.77px;font-size:12.5px;line-height:12.5px;color:#000;font-style:italic;-webkit-text-stroke:0.1px #000;">MS</div>
<div class="t" style="left:380.93px;top:486.77px;font-size:12.5px;line-height:12.5px;color:#000;font-style:italic;-webkit-text-stroke:0.1px #000;">F</div>
<div class="t" style="left:441.80px;top:486.77px;font-size:12.5px;line-height:12.5px;color:#000;letter-spacing:0.618px;font-style:italic;-webkit-text-stroke:0.1px #000;">P-value</div>
<div class="t" style="left:529.90px;top:486.77px;font-size:12.5px;line-height:12.5px;color:#000;letter-spacing:0.351px;font-style:italic;-webkit-text-stroke:0.1px #000;">F crit</div>
<div class="a" style="left:26px;top:497px;width:79px;height:24px;overflow:hidden"><div class="t" style="left:2.10px;top:9.77px;font-size:12.5px;line-height:12.5px;color:#000;letter-spacing:0.658px;-webkit-text-stroke:0.1px #000;">Between Groups</div></div>
<div class="t" style="left:161.80px;top:506.77px;font-size:12.5px;line-height:12.5px;color:#000;letter-spacing:0.370px;-webkit-text-stroke:0.1px #000;">180</div>
<div class="t" style="left:256.45px;top:506.77px;font-size:12.5px;line-height:12.5px;color:#000;-webkit-text-stroke:0.1px #000;">2</div>
<div class="t" style="left:328.50px;top:506.77px;font-size:12.5px;line-height:12.5px;color:#000;letter-spacing:0.694px;-webkit-text-stroke:0.1px #000;">90</div>
<div class="t" style="left:356.00px;top:506.77px;font-size:12.5px;line-height:12.5px;color:#000;letter-spacing:0.219px;-webkit-text-stroke:0.1px #000;">117.391304</div>
<div class="t" style="left:437.00px;top:506.77px;font-size:12.5px;line-height:12.5px;color:#000;letter-spacing:0.195px;-webkit-text-stroke:0.1px #000;">4.7997E-14</div>
<div class="t" style="left:515.80px;top:506.77px;font-size:12.5px;line-height:12.5px;color:#000;letter-spacing:0.161px;-webkit-text-stroke:0.1px #000;">3.35413083</div>
<div class="a" style="left:26px;top:517px;width:79px;height:24px;overflow:hidden"><div class="t" style="left:1.80px;top:9.77px;font-size:12.5px;line-height:12.5px;color:#000;letter-spacing:0.818px;-webkit-text-stroke:0.1px #000;">Within Groups</div></div>
<div class="t" style="left:157.80px;top:526.77px;font-size:12.5px;line-height:12.5px;color:#000;letter-spacing:0.419px;-webkit-text-stroke:0.1px #000;">20.7</div>
<div class="t" style="left:248.60px;top:526.77px;font-size:12.5px;line-height:12.5px;color:#000;letter-spacing:0.894px;-webkit-text-stroke:0.1px #000;">27</div>
<div class="t" style="left:275.20px;top:526.77px;font-size:12.5px;line-height:12.5px;color:#000;letter-spacing:0.206px;-webkit-text-stroke:0.1px #000;">0.76666667</div>
<div class="t" style="left:27.80px;top:566.77px;font-size:12.5px;line-height:12.5px;color:#000;letter-spacing:1.098px;-webkit-text-stroke:0.1px #000;">Total</div>
<div class="t" style="left:150.60px;top:566.77px;font-size:12.5px;line-height:12.5px;color:#000;letter-spacing:0.380px;-webkit-text-stroke:0.1px #000;">200.7</div>
<div class="t" style="left:248.60px;top:566.77px;font-size:12.5px;line-height:12.5px;color:#000;letter-spacing:0.894px;-webkit-text-stroke:0.1px #000;">29</div>
<div class="t" style="left:124.08px;top:634.02px;font-size:13px;line-height:13px;color:#242424;letter-spacing:0.368px;-webkit-text-stroke:0.35px #242424;">Hoja1</div>
<div class="t" style="left:182.78px;top:637.02px;font-size:13px;line-height:13px;color:#242424;letter-spacing:0.107px;">Sheet1</div>
<div class="t" style="left:8.02px;top:664.02px;font-size:12px;line-height:12px;color:#242424;letter-spacing:-0.375px;">Listo</div>
<div class="t" style="left:69.02px;top:664.02px;font-size:12px;line-height:12px;color:#242424;letter-spacing:-0.272px;">Accesibilidad: es necesario investigar</div>
<div class="t" style="left:708.82px;top:664.02px;font-size:12px;line-height:12px;color:#242424;letter-spacing:-1.081px;">100%</div>
</body></html>
